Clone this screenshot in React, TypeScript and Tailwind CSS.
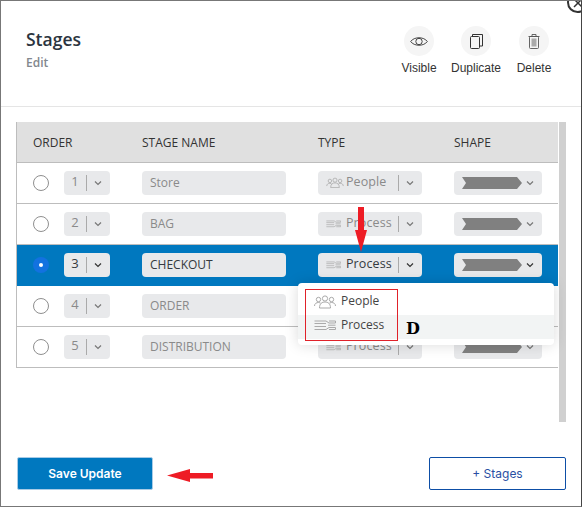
import React from "react";

const openSans = { fontFamily: '"Open Sans", sans-serif' };

function Chevron({ dark }: { dark?: boolean }) {
  return (
    <svg width="8" height="6" viewBox="0 0 8 6" fill="none" stroke={dark ? "#333" : "#777"} strokeWidth="1.2">
      <path d="M1 1.5 L4 4.5 L7 1.5" />
    </svg>
  );
}

function PeopleIcon({ color = "#aaa", w = 18, h = 11 }: { color?: string; w?: number; h?: number }) {
  return (
    <svg width={w} height={h} viewBox="0 0 22 14" fill="none" stroke={color} strokeWidth="1">
      <circle cx="11" cy="4" r="2.6" />
      <path d="M5.5 13.5 C5.5 9 8 7.5 11 7.5 C14 7.5 16.5 9 16.5 13.5 Z" />
      <circle cx="4.5" cy="5" r="2.2" />
      <path d="M0.5 11.5 C0.5 9 2.5 8 4.5 8 L6.5 8.5" />
      <circle cx="17.5" cy="5" r="2.2" />
      <path d="M21.5 11.5 C21.5 9 19.5 8 17.5 8 L15.5 8.5" />
    </svg>
  );
}

function ProcessIcon({ color = "#aaa", w = 15, h = 8 }: { color?: string; w?: number; h?: number }) {
  return (
    <svg width={w} height={h} viewBox="0 0 22 11" fill="none" stroke={color} strokeWidth="1">
      <path d="M0.5 1 H12 M0.5 3.5 H12 M0.5 6.5 H12 M0.5 9.5 H12" />
      <path d="M12 1 L15 3 H21.5 V1 H15 M12 9.5 L15 7.5 H21.5 V9.5 H15" />
      <path d="M14 5.2 H21.5" />
    </svg>
  );
}

function Shape() {
  return (
    <svg width="60" height="12" viewBox="0 0 60 12">
      <polygon points="0,0 55,0 60,6 55,12 0,12 4,6" fill="#808080" />
    </svg>
  );
}

type Row = { n: number; name: string; type: "People" | "Process"; active?: boolean };

const rows: Row[] = [
  { n: 1, name: "Store", type: "People" },
  { n: 2, name: "BAG", type: "Process" },
  { n: 3, name: "CHECKOUT", type: "Process", active: true },
  { n: 4, name: "ORDER", type: "Process" },
  { n: 5, name: "DISTRIBUTION", type: "Process" },
];

function StageRow({ row }: { row: Row }) {
  const text = row.active ? "text-[#343a40]" : "text-[#8a8a8a]";
  return (
    <div
      className={`grid h-[41px] grid-cols-[109px_176px_136px_1fr] items-center pb-px pl-4 text-[12px] border-b ${
        row.active ? "bg-[#0078bf] border-[#0078bf]" : "bg-white border-[#bdbdbd]"
      } last:border-[#bdbdbd]`}
    >
      <div className="flex items-center gap-[15px]">
        {row.active ? (
          <span className="flex h-4 w-4 items-center justify-center rounded-full bg-[#1272e0]">
            <span className="h-1 w-1 rounded-full bg-white" />
          </span>
        ) : (
          <span className="h-4 w-4 rounded-full border border-[#8f8f8f] bg-white" />
        )}
        <div className={`flex h-6 w-[46px] items-center rounded bg-[#e8e9eb] pl-1 ${text}`}>
          <span className="w-[14px] pb-0.5 text-center text-[13px]">{row.n}</span>
          <span className="ml-[4px] h-4 w-px bg-[#aaa]" />
          <span className="ml-[7px]">
            <Chevron dark={row.active} />
          </span>
        </div>
      </div>
      <div className={`flex h-6 w-[144px] items-center rounded bg-[#e8e9eb] pl-2 ${text}`}>{row.name}</div>
      <div className={`flex h-6 w-[104px] items-center rounded bg-[#e8e9eb] pl-2 ${text}`}>
        <span className="flex w-[20px] items-center">
          {row.type === "People" ? <PeopleIcon /> : <ProcessIcon />}
        </span>
        <span className="w-[52px] text-[12.5px] tracking-[0.1px]">{row.type}</span>
        <span className="h-4 w-px bg-[#aaa]" />
        <span className="ml-[7px]">
          <Chevron dark={row.active} />
        </span>
      </div>
      <div className="flex h-6 w-[88px] items-center rounded bg-[#e8e9eb] pl-2">
        <Shape />
        <span className="ml-[4px]">
          <Chevron dark={row.active} />
        </span>
      </div>
    </div>
  );
}

function ActionIcon({ label, children, w }: { label: string; children: React.ReactNode; w: string }) {
  return (
    <div className={`flex flex-col items-center ${w}`}>
      <span className="flex h-[30px] w-[30px] items-center justify-center rounded-full bg-[#f5f5f5]">{children}</span>
      <span className="mt-[5px] text-[12px] leading-[14px] text-[#333]" style={{ fontFamily: '"Liberation Sans", sans-serif' }}>
        {label}
      </span>
    </div>
  );
}

export default function App() {
  return (
    <div className="relative flex h-[507px] w-[582px] flex-col overflow-hidden border-y border-l border-r border-y-[#777] border-l-[#777] border-r-[#444] bg-white" style={openSans}>
      {/* close button peeking from the corner */}
      <span className="absolute -right-[7px] -top-[9px] flex h-[21px] w-[21px] items-center justify-center rounded-full border-2 border-[#333] bg-white">
        <svg width="10" height="10" viewBox="0 0 10 10" stroke="#333" strokeWidth="1.5">
          <path d="M1 1 L9 9 M9 1 L1 9" />
        </svg>
      </span>

      <header className="flex h-[106px] shrink-0 justify-between border-b border-[#e5e5e5] pl-[25px] pr-[22px]">
        <div className="pt-[26px]">
          <h1 className="text-[17.5px] font-semibold leading-[25px] text-[#2b3440]">Stages</h1>
          <p className="pt-[3px] text-[12px] font-semibold leading-[16px] text-[#82878e]">Edit</p>
        </div>
        <div className="flex gap-[8px] pt-[25px]">
          <ActionIcon label="Visible" w="w-[48px]">
            <svg width="18" height="11" viewBox="0 0 18 11" fill="none" stroke="#333" strokeWidth="0.9">
              <path d="M0.7 5.5 C4 0.5 14 0.5 17.3 5.5 C14 10.5 4 10.5 0.7 5.5 Z" />
              <circle cx="9" cy="5.5" r="3.2" />
            </svg>
          </ActionIcon>
          <ActionIcon label="Duplicate" w="w-[50px]">
            <svg width="13" height="15" viewBox="0 0 13 15" fill="none" stroke="#333" strokeWidth="1">
              <rect x="0.5" y="2.5" width="9" height="12" rx="1" fill="#f5f5f5" />
              <path d="M2.5 2.5 V0.5 H12.5 V12 H9.5" />
            </svg>
          </ActionIcon>
          <ActionIcon label="Delete" w="w-[50px]">
            <svg width="12" height="15" viewBox="0 0 12 15" fill="none" stroke="#555" strokeWidth="0.9">
              <path d="M0.5 2.5 H11.5 M4 2.5 V0.5 H8 V2.5" />
              <rect x="1.5" y="2.5" width="9" height="12" rx="1" />
              <rect x="3.5" y="4.5" width="5" height="8" fill="#aaa" stroke="none" />
            </svg>
          </ActionIcon>
        </div>
      </header>

      <main className="mt-[15px] flex h-[300px] shrink-0 items-start pl-[15px]">
        <div className="w-[542px] border-l border-[#bdbdbd]">
          <div className="grid h-[41px] grid-cols-[109px_176px_136px_1fr] items-center border-b border-[#bdbdbd] bg-[#e0e0e0] pl-4 pt-px text-[12px] text-[#333]">
            <span>ORDER</span>
            <span>STAGE NAME</span>
            <span>TYPE</span>
            <span>SHAPE</span>
          </div>
          {rows.map((r) => (
            <StageRow key={r.n} row={r} />
          ))}
        </div>
        <div className="ml-px h-[300px] w-[7px] bg-[#d0d0d0]" />
      </main>

      <footer className="mt-[35px] flex justify-between pl-[16px] pr-[15px]" style={{ fontFamily: "Inter, sans-serif" }}>
        <button className="flex h-[33px] w-[136px] items-center justify-center rounded-[2px] border border-[#a8cbe6] bg-[#0078bf] text-[12px] font-semibold text-white">
          Save Update
        </button>
        <button className="flex h-[33px] w-[137px] items-center justify-center rounded-[2px] border-[1.5px] border-[#0d4ea6] bg-white text-[12px] text-[#2a4fa3]">
          + Stages
        </button>
      </footer>

      {/* open dropdown */}
      <div className="absolute left-[297px] top-[282px] w-[256px] rounded bg-white py-[6px] text-[12px] text-[#444] shadow-[0_0_14px_rgba(0,0,0,0.15)]">
        <div className="flex h-[26px] items-center pb-[2px] pl-4">
          <span className="w-[27px]">
            <PeopleIcon w={22} h={15} />
          </span>
          People
        </div>
        <div className="flex h-[24px] items-center bg-[#f2f4f4] pb-1 pl-4">
          <span className="w-[27px]">
            <ProcessIcon w={22} h={11} />
          </span>
          Process
        </div>
      </div>

      {/* annotations */}
      <div className="absolute left-[304px] top-[288px] h-[52px] w-[93px] border border-[#e0222a]" />
      <span className="absolute left-[405px] top-[317px] text-[16px] font-bold leading-[22px] text-black" style={{ fontFamily: '"DejaVu Serif", serif' }}>
        D
      </span>
      <svg className="absolute left-[354px] top-[206px]" width="12" height="46" viewBox="0 0 12 46">
        <polygon points="3,0 9,0 9,23 12,23 6,45 0,23 3,23" fill="#ee1c25" />
      </svg>
      <svg className="absolute left-[166px] top-[468px]" width="47" height="13" viewBox="0 0 47 13">
        <polygon points="0,6.5 23,0 23,4 46,4 46,9.5 23,9.5 23,13" fill="#ee1c25" />
      </svg>
    </div>
  );
}
